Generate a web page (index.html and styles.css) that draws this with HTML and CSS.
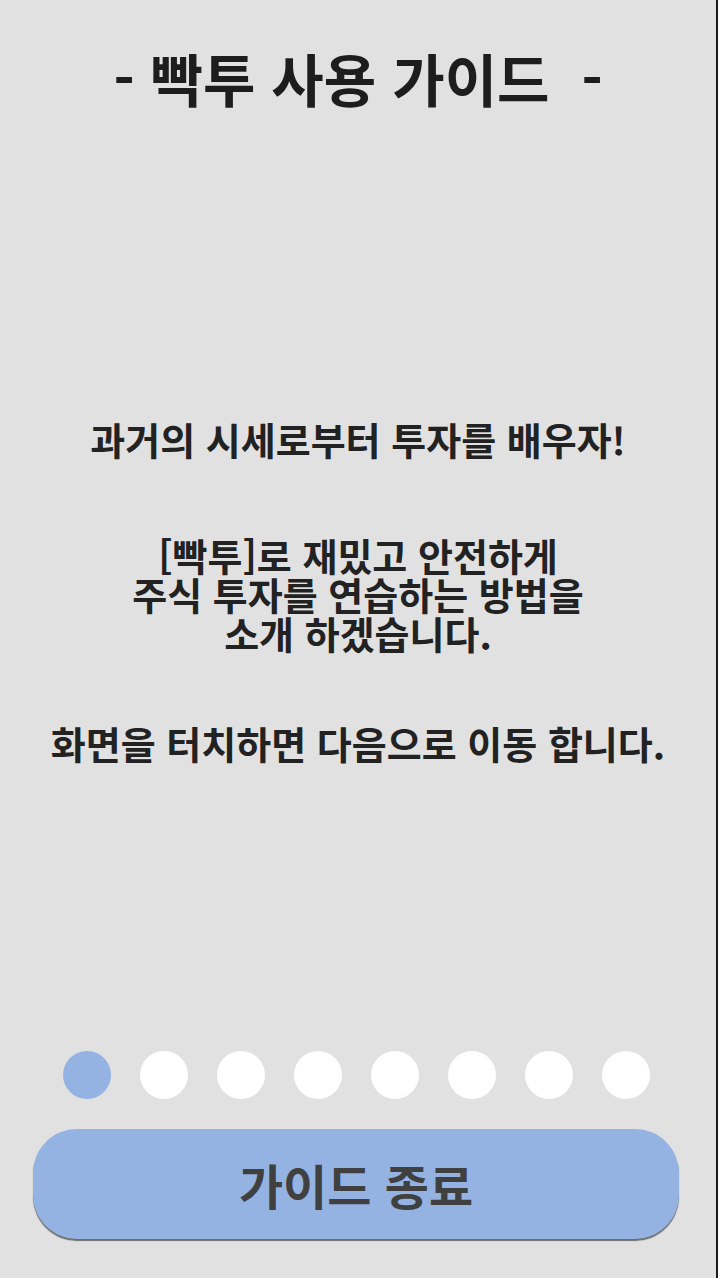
FILE: index.html
```html
<!DOCTYPE html>
<html lang="ko">
<head>
<meta charset="utf-8">
<link rel="stylesheet" href="styles.css">
</head>
<body>
<div class="screen">
  <h1 class="title">- 빡투 사용 가이드&nbsp; -</h1>
  <p class="text p1">과거의 시세로부터 투자를 배우자!</p>
  <p class="text p2">[빡투]로 재밌고 안전하게<br>주식 투자를 연습하는 방법을<br>소개 하겠습니다.</p>
  <p class="text p3">화면을 터치하면 다음으로 이동 합니다.</p>
  <div class="dots">
    <span class="dot active"></span>
    <span class="dot"></span>
    <span class="dot"></span>
    <span class="dot"></span>
    <span class="dot"></span>
    <span class="dot"></span>
    <span class="dot"></span>
    <span class="dot"></span>
  </div>
  <div class="btn">가이드 종료</div>
</div>
</body>
</html>
```
FILE: styles.css
```css
html, body {
  margin: 0;
  padding: 0;
  background: #e1e1e1;
}
.screen {
  box-sizing: border-box;
  width: 718px;
  height: 1278px;
  border-right: 2px solid #1b1b1b;
  padding-top: 43px;
  display: flex;
  flex-direction: column;
  font-family: "Noto Sans CJK KR", "Noto Sans", sans-serif;
  overflow: hidden;
}
.title {
  margin: 0;
  font-size: 57px;
  line-height: 68px;
  font-weight: 700;
  color: #1d1d1d;
  text-align: center;
}
.text {
  margin: 0;
  font-size: 38px;
  line-height: 39px;
  font-weight: 700;
  color: #222222;
  text-align: center;
}
.p1 { margin-top: 308px; }
.p2 { margin-top: 77px; }
.p3 {
  margin-top: 71px;
  line-height: 40px;
}
.dots {
  margin-top: 288px;
  padding-right: 4px;
  display: flex;
  justify-content: center;
  gap: 29px;
}
.dot {
  width: 48px;
  height: 48px;
  border-radius: 50%;
  background: #ffffff;
}
.dot.active {
  background: #94b3e3;
}
.btn {
  margin-top: 30px;
  margin-left: 33px;
  width: 646px;
  height: 110px;
  border-radius: 44px;
  background: #94b3e3;
  box-shadow: 0 2px 1px #6e6e6e;
  display: flex;
  align-items: center;
  justify-content: center;
  font-size: 48px;
  font-weight: 700;
  color: #404040;
}
```
